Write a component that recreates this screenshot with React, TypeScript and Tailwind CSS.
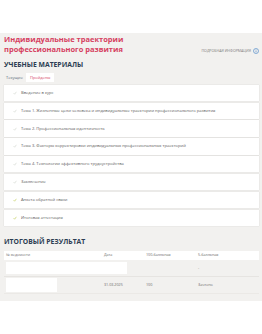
const items = [
  { title: "Введение в курс", done: false },
  { title: "Тема 1. Жизненные цели человека и индивидуальные траектории профессионального развития", done: false },
  { title: "Тема 2. Профессиональная идентичность", done: false },
  { title: "Тема 3. Факторы корректировки индивидуальных профессиональных траекторий", done: false },
  { title: "Тема 4. Технологии эффективного трудоустройства", done: false },
  { title: "Заключение", done: false },
  { title: "Анкета обратной связи", done: true },
  { title: "Итоговая аттестация", done: true },
];

function Check({ done }: { done: boolean }) {
  return (
    <svg width="4" height="4" viewBox="0 0 10 10" className="shrink-0">
      <path d="M1.5 5.5 L4 8 L8.5 2" fill="none"
        stroke={done ? "#b4c43c" : "#c9cfc6"} strokeWidth="1.4" />
    </svg>
  );
}

export default function App() {
  return (
    <div className="w-[262px] h-[334px] bg-white font-['Open_Sans',sans-serif] overflow-hidden">
      <div className="h-[33px]" />
      <div className="bg-[#f2f1ef] pl-[4px] pr-[3px] pb-[7px]">
        <div className="flex justify-between items-end">
          <h1 className="pt-[0.5px] text-[7.5px] leading-[10.7px] font-bold text-[#d6405f]">
            Индивидуальные траектории<br />профессионального развития
          </h1>
          <div className="flex items-center gap-[2px] mb-[1px] text-[3.6px] leading-[6px] uppercase text-[#7d7d7d]">
            Подробная информация
            <svg width="6" height="6" viewBox="0 0 12 12">
              <circle cx="6" cy="6" r="5" fill="none" stroke="#4b87c8" strokeWidth="1.3" />
              <circle cx="6" cy="3.6" r="0.8" fill="#4b87c8" />
              <path d="M6 5.2 V8.6" stroke="#4b87c8" strokeWidth="1.3" />
            </svg>
          </div>
        </div>

        <h2 className="mt-[5.2px] text-[6.8px] leading-[10px] font-bold uppercase text-[#2c3d52]">
          Учебные материалы
        </h2>

        <div className="mt-[2.7px] flex items-center h-[9.4px] text-[4px] leading-[9.4px]">
          <span className="px-[2px] text-[#5d6b7a]">Текущие</span>
          <span className="ml-[1px] px-[4px] bg-white text-[#d6405f]">Пройдены</span>
        </div>

        <div className="mt-[2.6px] flex flex-col gap-[1.55px]">
          {items.map((it) => (
            <div key={it.title}
              className="h-[16.3px] bg-white flex items-center gap-[4px] pl-[9px] shadow-[0_0_1px_rgba(0,0,0,0.18)]">
              <Check done={it.done} />
              <span className="text-[4.1px] leading-[6px] text-[#5a5a5a] whitespace-nowrap">{it.title}</span>
            </div>
          ))}
        </div>

        <h2 className="mt-[11px] text-[6.8px] leading-[10px] font-bold uppercase text-[#2c3d52]">
          Итоговый результат
        </h2>

        <div className="mt-[3.9px] text-[3.7px] text-[#6a6a6a]">
          <div className="h-[8.7px] bg-white grid grid-cols-[98px_42px_52px_1fr] items-center px-[2px]">
            <span>№ ведомости</span>
            <span>Дата</span>
            <span>100-балльная</span>
            <span>5-балльная</span>
          </div>
          <div className="h-[17.3px] grid grid-cols-[98px_42px_52px_1fr] items-center px-[2px] border-b border-[#e6e4e1]">
            <div className="h-[12.3px] w-[121px] bg-white" />
            <span />
            <span />
            <span>-</span>
          </div>
          <div className="h-[17px] grid grid-cols-[98px_42px_52px_1fr] items-center px-[2px] border-b border-[#ebe9e6]">
            <div className="h-[14.3px] w-[51px] bg-white" />
            <span>31.03.2025</span>
            <span>100</span>
            <span>Зачтено</span>
          </div>
        </div>
      </div>
    </div>
  );
}
